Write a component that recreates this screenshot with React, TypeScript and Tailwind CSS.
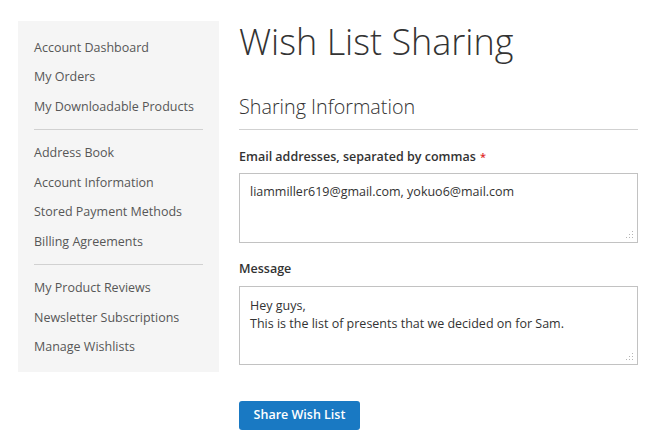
import React from "react";

const groups = [
  ["Account Dashboard", "My Orders", "My Downloadable Products"],
  ["Address Book", "Account Information", "Stored Payment Methods", "Billing Agreements"],
  ["My Product Reviews", "Newsletter Subscriptions", "Manage Wishlists"],
];

function Grip() {
  return (
    <svg className="absolute right-[3px] bottom-[3px]" width="8" height="8" viewBox="0 0 8 8">
      <g fill="#b5b5b5">
        <rect x="6" y="0" width="1" height="1" />
        <rect x="6" y="3" width="1" height="1" />
        <rect x="3" y="3" width="1" height="1" />
        <rect x="6" y="6" width="1" height="1" />
        <rect x="3" y="6" width="1" height="1" />
        <rect x="0" y="6" width="1" height="1" />
      </g>
    </svg>
  );
}

export default function App() {
  return (
    <div
      className="w-[645px] h-[441px] bg-white flex gap-[20px] pl-[18px] pt-[21px]"
      style={{ fontFamily: '"Open Sans", sans-serif' }}
    >
      <nav className="w-[201px] h-[351px] bg-[#f5f5f5] pt-[11px] px-[16px] shrink-0">
        {groups.map((g, gi) => (
          <div key={gi}>
            {gi > 0 && <div className="h-px bg-[#d1d1d1] my-[8px]" />}
            {g.map((t) => (
              <div key={t} className="h-[29.5px] pt-[3px] flex items-center text-[12.5px] text-[#575757] whitespace-nowrap">
                {t}
              </div>
            ))}
          </div>
        ))}
      </nav>
      <main className="w-[399px] flex flex-col">
        <h1 className="text-[36px] font-light text-[#333] leading-[44px] mt-[-1px] whitespace-nowrap">Wish List Sharing</h1>
        <h2 className="text-[19.75px] font-light text-[#333] leading-[28px] mt-[29px] pb-[8px] border-b border-[#d1d1d1]">
          Sharing Information
        </h2>
        <div className="mt-[17px] text-[12.5px] font-semibold text-[#333] leading-[20px]">
          Email addresses, separated by commas <span className="text-[#e02b27] text-[11px] ml-[1px]">*</span>
        </div>
        <div className="relative mt-[6px] h-[70px] border border-[#c2c2c2] pt-[9px] px-[10px] text-[12.5px] text-[#333] leading-[18px]">
          liammiller619@gmail.com, yokuo6@mail.com
          <Grip />
        </div>
        <div className="mt-[16px] text-[12.5px] font-semibold text-[#333] leading-[20px]">Message</div>
        <div className="relative mt-[7px] h-[79px] border border-[#c2c2c2] pt-[10px] px-[10px] text-[12.5px] text-[#333] leading-[18px]">
          <div>Hey guys,</div>
          <div>This is the list of presents that we decided on for Sam.</div>
          <Grip />
        </div>
        <button className="mt-[36px] w-[121px] h-[29px] bg-[#1979c3] text-white text-[12.5px] font-semibold rounded-[3px] flex items-center justify-center">
          Share Wish List
        </button>
      </main>
    </div>
  );
}
